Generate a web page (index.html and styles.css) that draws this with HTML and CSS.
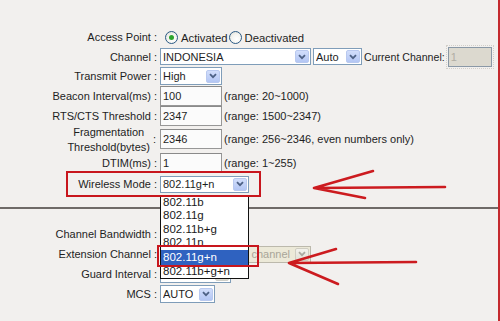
FILE: index.html
```html
<!DOCTYPE html>
<html>
<head>
<meta charset="utf-8">
<link rel="stylesheet" href="styles.css">
</head>
<body>
<div class="page">
  <div class="form top">
    <div class="row r-ap">
      <div class="lbl">Access Point :</div>
      <div class="val">
        <span class="radio on"></span><span class="rtxt">Activated</span>
        <span class="radio second"></span><span class="rtxt">Deactivated</span>
      </div>
    </div>
    <div class="row r-ch">
      <div class="lbl">Channel :</div>
      <div class="val">
        <div class="sel w-country"><span class="st">INDONESIA</span><span class="btn"><svg viewBox="0 0 8 6"><path d="M1 1.2 L4 4.2 L7 1.2"/></svg></span></div>
        <div class="sel w-auto"><span class="st">Auto</span><span class="btn"><svg viewBox="0 0 8 6"><path d="M1 1.2 L4 4.2 L7 1.2"/></svg></span></div>
        <span class="cc">Current Channel:</span>
        <div class="focusring"><div class="inp dis w-cur">1</div></div>
      </div>
    </div>
    <div class="row r-tp">
      <div class="lbl">Transmit Power :</div>
      <div class="val">
        <div class="sel w-high"><span class="st">High</span><span class="btn"><svg viewBox="0 0 8 6"><path d="M1 1.2 L4 4.2 L7 1.2"/></svg></span></div>
      </div>
    </div>
    <div class="row r-bi">
      <div class="lbl">Beacon Interval(ms) :</div>
      <div class="val"><div class="inp w-num">100</div><span class="rng">(range: 20~1000)</span></div>
    </div>
    <div class="row r-rts">
      <div class="lbl">RTS/CTS Threshold :</div>
      <div class="val"><div class="inp w-num">2347</div><span class="rng">(range: 1500~2347)</span></div>
    </div>
    <div class="row r-frag">
      <div class="lbl two"><div class="twol">Fragmentation<br>Threshold(bytes)</div><span class="colon">:</span></div>
      <div class="val"><div class="inp w-num">2346</div><span class="rng">(range: 256~2346, even numbers only)</span></div>
    </div>
    <div class="row r-dtim">
      <div class="lbl">DTIM(ms) :</div>
      <div class="val"><div class="inp w-num">1</div><span class="rng">(range: 1~255)</span></div>
    </div>
    <div class="row r-wm">
      <div class="lbl">Wireless Mode :</div>
      <div class="val">
        <div class="sel w-mode"><span class="st">802.11g+n</span><span class="btn"><svg viewBox="0 0 8 6"><path d="M1 1.2 L4 4.2 L7 1.2"/></svg></span></div>
      </div>
    </div>
  </div>

  <div class="sep"></div>

  <div class="form bottom">
    <div class="row r-low">
      <div class="lbl">Channel Bandwidth :</div>
      <div class="val">
        <div class="sel w-bw"><span class="st"></span><span class="btn"><svg viewBox="0 0 8 6"><path d="M1 1.2 L4 4.2 L7 1.2"/></svg></span></div>
      </div>
    </div>
    <div class="row r-low">
      <div class="lbl">Extension Channel :</div>
      <div class="val">
        <div class="sel dis w-ext"><span class="st ext">channel</span><span class="btn"><svg viewBox="0 0 8 6"><path d="M1 1.2 L4 4.2 L7 1.2"/></svg></span></div>
      </div>
    </div>
    <div class="row r-low">
      <div class="lbl">Guard Interval :</div>
      <div class="val">
        <div class="sel w-gi"><span class="st"></span><span class="btn grey"><svg viewBox="0 0 8 6"><path d="M1 1.2 L4 4.2 L7 1.2"/></svg></span></div>
      </div>
    </div>
    <div class="row r-low">
      <div class="lbl">MCS :</div>
      <div class="val">
        <div class="sel w-mcs"><span class="st">AUTO</span><span class="btn"><svg viewBox="0 0 8 6"><path d="M1 1.2 L4 4.2 L7 1.2"/></svg></span></div>
      </div>
    </div>
  </div>

  <ul class="list">
    <li>802.11b</li>
    <li>802.11g</li>
    <li>802.11b+g</li>
    <li>802.11n</li>
    <li class="hl">802.11g+n</li>
    <li>802.11b+g+n</li>
  </ul>

  <div class="mark mark-wm"></div>
  <div class="mark mark-hl"></div>

  <svg class="arrows" width="500" height="321" viewBox="0 0 500 321">
    <g fill="none" stroke="#cc1b1f" stroke-width="2.6" stroke-linecap="round" stroke-linejoin="round">
      <path d="M445 187 L314 188 M314 188 L373 171 M314 188 L365 198"/>
      <path d="M416 262 L289 263 M289 263 L336 249 M289 263 L338 284"/>
    </g>
  </svg>
</div>
</body>
</html>
```

FILE: styles.css
```css
html, body {
  margin: 0;
  padding: 0;
  background: #f2f0ee;
}

.page {
  position: relative;
  width: 498px;
  height: 321px;
  border-right: 2px solid #c42a2e;
  background: #f2f0ee;
  font-family: "Liberation Sans", Arial, sans-serif;
  font-size: 11px;
  color: #1e1e1e;
  overflow: hidden;
}

.form.top {
  padding-top: 27px;
}

.row {
  display: flex;
  align-items: center;
}

.lbl {
  flex: none;
  width: 157px;
  text-align: right;
  white-space: nowrap;
}

.lbl.two {
  display: flex;
  justify-content: flex-end;
  align-items: center;
}

.twol {
  text-align: center;
  line-height: 15px;
  padding-top: 1px;
}

.colon {
  margin-left: 3px;
  margin-right: 1px;
}

.val {
  margin-left: 3px;
  display: flex;
  align-items: center;
  white-space: nowrap;
}

.r-ap { height: 20px; }
.r-ch { height: 19px; }
.r-tp { height: 20px; }
.r-bi { height: 20px; }
.r-rts { height: 19px; }
.r-frag { height: 28px; }
.r-dtim { height: 20px; }
.r-wm { height: 22px; }
.r-low { height: 20px; }

/* radios */
.radio {
  width: 11px;
  height: 11px;
  border: 1px solid #2b5a85;
  border-radius: 50%;
  background: radial-gradient(circle at 60% 65%, #ffffff 0, #f4f4f0 50%, #d8d8d0 100%);
  position: relative;
  margin-left: 5px;
  margin-right: 3px;
  margin-top: 1px;
}
.radio.second {
  margin-left: 2px;
  margin-right: 2px;
}
.radio.on::after {
  content: "";
  position: absolute;
  left: 3px;
  top: 3px;
  width: 5px;
  height: 5px;
  border-radius: 50%;
  background: #2ea52e;
}
.rtxt {
  font-size: 11.3px;
  padding-top: 2px;
}

/* selects */
.sel {
  box-sizing: border-box;
  height: 17px;
  border: 1px solid #7f9db9;
  background: #ffffff;
  display: flex;
  align-items: center;
  justify-content: space-between;
  padding-left: 2px;
  padding-right: 1px;
}
.sel .st {
  overflow: hidden;
  white-space: nowrap;
}
.sel .st.ext {
  margin-left: auto;
  margin-right: 5px;
}
.btn {
  flex: none;
  width: 14px;
  height: 13px;
  box-sizing: border-box;
  border: 1px solid #b9c9ef;
  border-radius: 2px;
  background: linear-gradient(#d2defb, #b3c6f4);
  display: flex;
  align-items: center;
  justify-content: center;
}
.btn svg {
  width: 8px;
  height: 6px;
}
.btn svg path {
  fill: none;
  stroke: #4d6185;
  stroke-width: 1.8;
}
.btn.grey {
  background: linear-gradient(#eeeeea, #d8d8d2);
  border-color: #cfcfc8;
}
.btn.grey svg path, .sel.dis .btn svg path {
  stroke: #aaa9a0;
}
.sel.dis {
  background: #ece9d8;
  border-color: #bcb9ac;
  color: #a8a598;
}
.sel.dis .btn {
  background: linear-gradient(#f3f2ec, #e2e0d6);
  border-color: #cfcdc2;
}

.w-country { width: 151px; }
.w-auto { width: 49px; margin-left: 2px; }
.w-high { width: 62px; height: 18px; }
.w-mode { width: 89px; }
.w-bw { width: 80px; }
.w-ext { width: 151px; }
.w-gi { width: 71px; }
.w-mcs { width: 55px; height: 18px; }

.cc {
  margin-left: 2px;
  font-size: 10.6px;
}

.focusring {
  margin-left: 1px;
  padding: 1px;
  border: 1px dotted #d2cfc9;
}
.inp {
  box-sizing: border-box;
  height: 20px;
  border: 1px solid #979797;
  border-top-color: #8a8a8a;
  background: #fbfbfb;
  padding-left: 2px;
  display: flex;
  align-items: center;
}
.inp.dis {
  background: #dcd9cf;
  border-color: #8a98a6;
  color: #b0ada4;
}
.w-cur { width: 44px; }
.w-num { width: 62px; }

.rng {
  margin-left: 2px;
}

/* separator */
.sep {
  height: 2px;
  background: #6f6a67;
  margin-top: 12px;
}
.form.bottom {
  padding-top: 15px;
}

/* overlaid dropdown list */
.list {
  position: absolute;
  left: 160px;
  top: 195px;
  width: 89px;
  box-sizing: border-box;
  margin: 0;
  padding: 0;
  list-style: none;
  background: #ffffff;
  border: 1px solid #111111;
  font-size: 11.5px;
}
.list li {
  height: 13.4px;
  line-height: 13.4px;
  padding-left: 2px;
  color: #1a1a1a;
}
.list li.hl {
  background: #2f62c0;
  color: #ffffff;
  height: 15px;
  line-height: 15px;
}

/* red annotation boxes */
.mark {
  position: absolute;
  border: 2.5px solid #c8161d;
  box-sizing: border-box;
}
.mark-wm {
  left: 66px;
  top: 171px;
  width: 195px;
  height: 26px;
}
.mark-hl {
  left: 157px;
  top: 245px;
  width: 102px;
  height: 22px;
}

.arrows {
  position: absolute;
  left: 0;
  top: 0;
}
```
